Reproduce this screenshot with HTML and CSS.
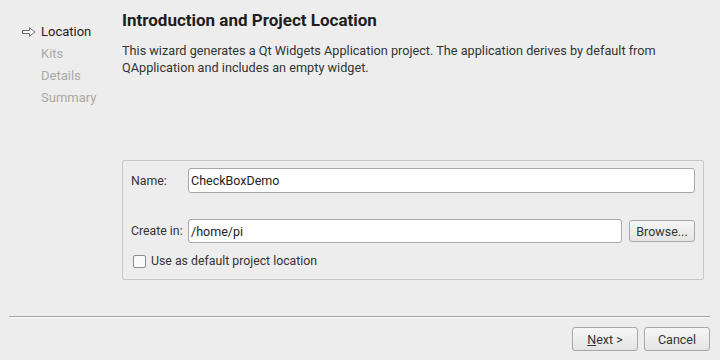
FILE: index.html
```html
<!DOCTYPE html>
<html lang="en">
<head>
    <meta charset="UTF-8">
    <title>Qt Widgets Application</title>
    <link rel="stylesheet" href="styles.css">
</head>
<body>
    <div class="wizard">
        <div class="top">
            <ul class="steps">
                <li class="current">
                    <svg class="arrow" width="14" height="10" viewBox="0 0 14 10">
                        <path d="M0.5 3.5 H7.5 V0.8 L13 5 L7.5 9.2 V6.5 H0.5 Z" fill="#fff" stroke="#6a6a6a" stroke-width="1" stroke-linejoin="round"/>
                    </svg>
                    Location
                </li>
                <li>Kits</li>
                <li>Details</li>
                <li>Summary</li>
            </ul>

            <div class="page">
                <h1>Introduction and Project Location</h1>
                <p>This wizard generates a Qt Widgets Application project. The application derives by default from QApplication and includes an empty widget.</p>

                <div class="group">
                    <div class="row">
                        <label for="name">Name:</label>
                        <input type="text" id="name" class="name" value="CheckBoxDemo">
                    </div>
                    <div class="row path-row">
                        <label for="path">Create in:</label>
                        <input type="text" id="path" value="/home/pi">
                        <button type="button" class="browse">Browse...</button>
                    </div>
                    <label class="check"><span class="box"></span>Use as default project location</label>
                </div>
            </div>
        </div>

        <div class="footer">
            <hr class="sep">
            <div class="buttons">
                <button type="button"><u>N</u>ext &gt;</button>
                <button type="button">Cancel</button>
            </div>
        </div>
    </div>
</body>
</html>
```

FILE: styles.css
```css
body {
    margin: 0;
    background-color: #ededed;
    font-family: Roboto, "Liberation Sans", sans-serif;
    color: #333;
}
.wizard {
    width: 720px;
    height: 360px;
    display: flex;
    flex-direction: column;
}
.top {
    display: flex;
}
.steps {
    list-style: none;
    margin: 0;
    padding: 21px 0 0 22px;
    width: 100px;
    font-size: 13px;
    line-height: 22px;
    color: #a9a9a9;
}
.steps li {
    padding-left: 19px;
    position: relative;
}
.steps li.current {
    color: #222;
}
.arrow {
    position: absolute;
    left: 0;
    top: 6px;
}
.page {
    flex: 1;
    padding: 10px 16px 0 0;
}
h1 {
    margin: 0;
    font-size: 17px;
    line-height: 20px;
    font-weight: bold;
    color: #1e1e1e;
}
.page p {
    margin: 12px 0 0 0;
    font-size: 12.7px;
    line-height: 17px;
    color: #333;
}
.group {
    margin-top: 84px;
    height: 111px;
    border: 1px solid #c6c6c6;
    border-radius: 2px;
    padding: 7px 8px 0 8px;
    font-size: 12.3px;
}
.row {
    display: flex;
    align-items: center;
    gap: 7px;
}
.row label {
    width: 50px;
    flex: none;
    white-space: nowrap;
}
.row input {
    flex: 1;
    height: 24px;
    box-sizing: border-box;
    border: 1px solid #a8a8a8;
    border-radius: 3px;
    background: white;
    padding: 0 2px;
    font-family: inherit;
    font-size: 12.5px;
    color: #222;
    outline: none;
}
.row input.name {
    height: 25px;
}
.path-row {
    margin-top: 26px;
}
.browse {
    width: 66px;
}
.check {
    display: flex;
    align-items: center;
    margin-top: 11px;
}
.box {
    width: 11px;
    height: 11px;
    border: 1px solid #8c8c8c;
    border-radius: 2px;
    background: #fafafa;
    margin: 0 5px 0 2px;
}
button {
    height: 22px;
    border: 1px solid #a8a8a8;
    border-radius: 3px;
    background: linear-gradient(#f6f6f6, #e4e4e4);
    font-family: inherit;
    font-size: 12.5px;
    color: #333;
    padding: 0;
}
.footer {
    margin-top: 36px;
}
.sep {
    margin: 0 10px 0 9px;
    border: none;
    border-top: 1px solid #a4a4a4;
    border-bottom: 1px solid #fafafa;
}
.buttons {
    display: flex;
    justify-content: flex-end;
    gap: 6px;
    padding: 9px 10px 0 0;
}
.buttons button {
    width: 66px;
    height: 24px;
}
.buttons u {
    text-decoration-thickness: 1px;
}
```
